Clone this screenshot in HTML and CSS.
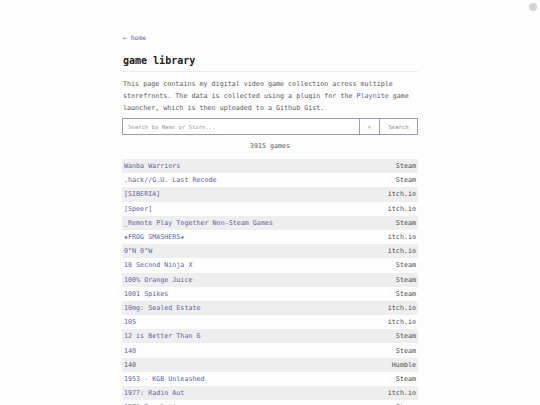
FILE: index.html
```html
<!DOCTYPE html>
<html>
<head>
<meta charset="utf-8">
<link rel="stylesheet" href="styles.css">
</head>
<body>
<span class="dot"></span>
<main class="page">
  <a class="back" href="#">← home</a>
  <h1 class="title">game library</h1>
  <p class="intro">This page contains my digital video game collection across multiple storefronts. The data is collected using a plugin for the <a href="#">Playnite</a> game launcher, which is then uploaded to a Github Gist.</p>
  <form class="search">
    <input class="search-input" type="text" placeholder="Search by Name or Store...">
    <button class="search-clear" type="button">×</button>
    <button class="search-btn" type="button">Search</button>
  </form>
  <p class="count">3915 games</p>
  <table class="games">
    <tr><td><a href="#">Wanba Warriors</a></td><td>Steam</td></tr>
    <tr><td><a href="#">.hack//G.U. Last Recode</a></td><td>Steam</td></tr>
    <tr><td><a href="#">[SIBERIA]</a></td><td>itch.io</td></tr>
    <tr><td><a href="#">[Speer]</a></td><td>itch.io</td></tr>
    <tr><td><a href="#">_Remote Play Together Non-Steam Games</a></td><td>Steam</td></tr>
    <tr><td><a href="#">★FROG SMASHERS★</a></td><td>itch.io</td></tr>
    <tr><td><a href="#">0°N 0°W</a></td><td>itch.io</td></tr>
    <tr><td><a href="#">10 Second Ninja X</a></td><td>Steam</td></tr>
    <tr><td><a href="#">100% Orange Juice</a></td><td>Steam</td></tr>
    <tr><td><a href="#">1001 Spikes</a></td><td>Steam</td></tr>
    <tr><td><a href="#">10mg: Sealed Estate</a></td><td>itch.io</td></tr>
    <tr><td><a href="#">105</a></td><td>itch.io</td></tr>
    <tr><td><a href="#">12 is Better Than 6</a></td><td>Steam</td></tr>
    <tr><td><a href="#">140</a></td><td>Steam</td></tr>
    <tr><td>140</td><td>Humble</td></tr>
    <tr><td><a href="#">1953 - KGB Unleashed</a></td><td>Steam</td></tr>
    <tr><td><a href="#">1977: Radio Aut</a></td><td>itch.io</td></tr>
    <tr><td><a href="#">1979 Revolution</a></td><td>Steam</td></tr>
  </table>
</main>
</body>
</html>
```
FILE: styles.css
```css
html, body {
  margin: 0;
  padding: 0;
  background: #fdfdfd;
  height: 405px;
  overflow: hidden;
}
body {
  font-family: "DejaVu Sans Mono", "Liberation Mono", monospace;
  color: #5a5a5a;
  font-size: 6.7px;
}
a {
  color: #625f9c;
  text-decoration: none;
}
.dot {
  position: absolute;
  top: 3px;
  right: 3px;
  width: 8px;
  height: 8px;
  border-radius: 50%;
  background: #d4d4d8;
}
.page {
  width: 296px;
  margin: 0 auto;
  padding-top: 34px;
  display: flex;
  flex-direction: column;
}
.back {
  font-size: 6.4px;
  line-height: 8px;
  align-self: flex-start;
  padding-left: 1px;
}
.title {
  margin: 12px 0 0;
  font-size: 10px;
  line-height: 14px;
  color: #222;
  font-weight: bold;
  padding-bottom: 3px;
  padding-left: 1px;
  border-bottom: 1px dotted #ddd;
}
.intro {
  margin: 6px 0 0;
  line-height: 12px;
  padding-left: 1px;
}
.search {
  display: flex;
  margin-top: 4px;
  height: 17px;
  border: 1px solid #9a98c4;
  box-sizing: border-box;
}
.search-input {
  flex: 1;
  border: none;
  padding: 0 5px;
  font: inherit;
  font-size: 5.6px;
  color: #555;
  background: #fff;
  outline: none;
}
.search-input::placeholder { color: #999; }
.search-clear, .search-btn {
  border: none;
  border-left: 1px solid #9a98c4;
  background: #fff;
  font: inherit;
  font-size: 5.6px;
  color: #888;
  padding: 0;
}
.search-clear { width: 20px; }
.search-btn { width: 38px; }
.count {
  margin: 6px 0 0;
  text-align: center;
  line-height: 10px;
}
.games {
  margin-top: 8px;
  border-collapse: collapse;
  width: 100%;
}
.games td {
  height: 14.2px;
  padding: 0 2px;
  line-height: 8px;
  white-space: nowrap;
}
.games td:last-child { text-align: right; color: #4a4a4a; }
.games tr:nth-child(odd) { background: #eeeeee; }
```
